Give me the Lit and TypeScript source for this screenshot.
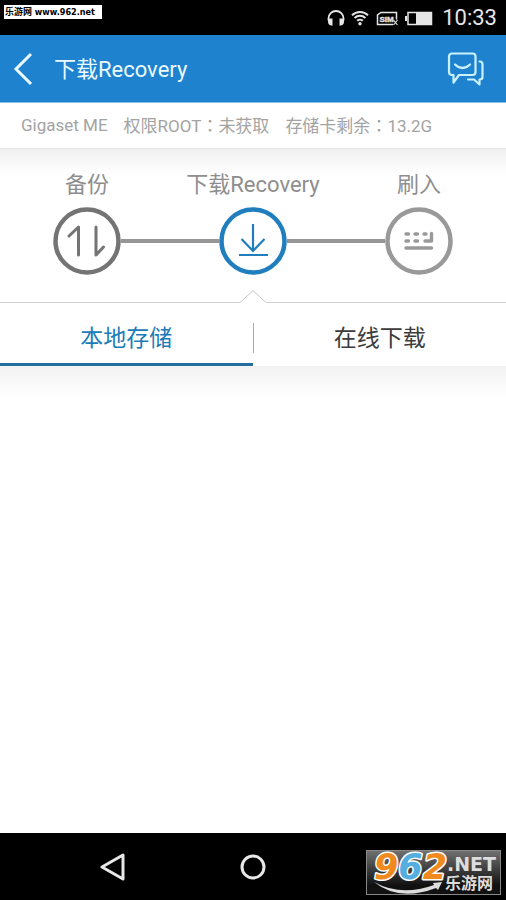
import { LitElement, html, css, svg } from "lit";
import { customElement, state } from "lit/decorators.js";
import { classMap } from "lit/directives/class-map.js";

const backupIcon = svg`<path d="M16 29l9.500-9v28M43 20v28l7.500-8" stroke-width="3" stroke-linecap="round" stroke-linejoin="round" />`;
const downloadIcon = svg`<path d="M34 17v27M22.500 32L34 44l11.500-12M20 48h29" stroke-width="2.200" />`;
const flashIcon = svg`<path d="M21 27h2.500M30 27h2.500M39 27h2M21 34h2.500M30 34h2.500M40 34h6.500v-7.500M21 41h25.500" stroke-width="3.400" stroke-linecap="round" stroke-linejoin="round" />`;

@customElement("status-bar")
class StatusBar extends LitElement {
  static styles = css`
    :host {
      display: flex;
      align-items: center;
      justify-content: flex-end;
      height: 35px;
      padding-right: 9px;
      background: #000;
      color: #e6e6e6;
      font: 400 22px/37px Roboto, sans-serif;
    }
    svg { display: block; }
    .wifi { margin-left: 6px; }
    .sim { margin-left: 7px; }
    .battery { margin: 0 9px 0 7px; }
    .sim-text { font: 700 8px "Liberation Sans", sans-serif; }
  `;
  render() {
    return html`
      <svg width="18" height="18" viewBox="0 0 18 18" fill="none" stroke="#e6e6e6">
        <path d="M1.500 11.500V9.500a7.500 7.500 0 0 1 15 0v2" stroke-width="1.800" />
        <path d="M1 11q0-1.500 2-1.500h2.500v7H4q-3-.5-3-4zM17 11q0-1.500-2-1.500h-2.500v7h1.500q3-.5 3-4z" fill="#e6e6e6" stroke="none" />
      </svg>
      <svg class="wifi" width="18" height="18" viewBox="0 0 18 18" fill="none" stroke="#e6e6e6" stroke-width="2">
        <path d="M1 6.200a11.500 11.500 0 0 1 16 0M3.600 9a7.800 7.800 0 0 1 10.800 0M6.200 11.800a4 4 0 0 1 5.600 0" />
        <circle cx="9" cy="14.700" r="1.700" fill="#e6e6e6" stroke="none" />
      </svg>
      <svg class="sim" width="22" height="18" viewBox="0 0 22 18" fill="none" stroke="#e6e6e6">
        <path d="M17 15.500H1.500V6L5 3.500h15.500v7" stroke-width="1.500" />
        <text class="sim-text" x="3.500" y="13" fill="#e6e6e6" stroke="#e6e6e6" stroke-width=".4">SIM</text>
        <path d="M17.500 11l4 5M21.500 11l-4 5" stroke-width="1.200" />
      </svg>
      <svg class="battery" width="28" height="18" viewBox="0 0 28 18">
        <path d="M0 7h2v5H0z" fill="#e6e6e6" />
        <path d="M3 3.500h23.500v12H3z" fill="none" stroke="#e6e6e6" stroke-width="1.500" />
        <path d="M11 4h15v11H11z" fill="#e6e6e6" />
      </svg>
      <span>10:33</span>
    `;
  }
}

@customElement("step-track")
class StepTrack extends LitElement {
  static styles = css`
    :host {
      display: block;
      padding-top: 22px;
      background: linear-gradient(#f0f0f0, #fff 26px);
      color: #8e8e8e;
    }
    ol {
      display: grid;
      grid-template-columns: repeat(3, 1fr);
      margin: 0;
      padding: 0 4px;
      list-style: none;
    }
    .label {
      display: block;
      height: 36px;
      font-size: 22px;
      line-height: 28px;
      text-align: center;
      white-space: nowrap;
    }
    .node { display: flex; align-items: center; }
    .line { flex: 1; height: 4px; background: #969696; }
    .hidden { visibility: hidden; }
    svg { display: block; flex: none; fill: none; stroke: currentColor; }
    .done { color: #747474; }
    .active { color: #207ebf; }
    .pending { color: #999; }
    .pointer { display: flex; margin-top: 15px; }
    .rule { flex: 1; border-bottom: 1px solid #d2d2d2; }
    .notch { stroke: #c8c8c8; }
  `;
  private steps = [
    { label: "备份", tone: "done", icon: backupIcon },
    { label: "下载Recovery", tone: "active", icon: downloadIcon },
    { label: "刷入", tone: "pending", icon: flashIcon },
  ];
  render() {
    const last = this.steps.length - 1;
    return html`
      <ol>
        ${this.steps.map(
          (s, i) => html`<li>
            <span class="label">${s.label}</span>
            <div class="node">
              <span class=${classMap({ line: true, hidden: i === 0 })}></span>
              <svg class=${s.tone} width="68" height="68" viewBox="0 0 68 68">
                <circle cx="34" cy="34" r="31.500" stroke-width="4.500" />
                ${s.icon}
              </svg>
              <span class=${classMap({ line: true, hidden: i === last })}></span>
            </div>
          </li>`
        )}
      </ol>
      <div class="pointer">
        <span class="rule"></span>
        <svg class="notch" width="26" height="13" viewBox="0 0 26 13"><path d="M0 12.500L13 .7l13 11.800" /></svg>
        <span class="rule"></span>
      </div>
    `;
  }
}

@customElement("site-badge")
class SiteBadge extends LitElement {
  static styles = css`
    :host {
      display: block;
      box-sizing: border-box;
      width: 135px;
      height: 45px;
      border: 1px solid #888;
      background: linear-gradient(#707070, #111 80%);
    }
    svg { display: block; overflow: visible; }
    .digits { font: italic 700 35px "DejaVu Sans", sans-serif; paint-order: stroke; stroke: #fff; stroke-width: 3px; stroke-linejoin: round; }
    .orange { fill: #f08a1d; }
    .blue { fill: #55aee0; }
    .net { font: 700 19px "DejaVu Sans", sans-serif; fill: #ddd; }
    .name { font: 700 16px "Noto Sans CJK SC", sans-serif; fill: #ddd; }
  `;
  render() {
    return html`<svg width="133" height="43" viewBox="0 0 133 43">
      <path d="M7 31q27 15 60 3l-1-2 9-1-4 8-2-2q-37 14-62-6z" fill="#ddd" />
      <text class="digits" x="7" y="28"><tspan class="orange">9</tspan><tspan class="blue">6</tspan><tspan class="orange">2</tspan></text>
      <text class="net" x="80" y="20">.NET</text>
      <text class="name" x="78" y="38">乐游网</text>
    </svg>`;
  }
}

@customElement("app-root")
class AppRoot extends LitElement {
  static styles = css`
    :host {
      display: flex;
      flex-direction: column;
      position: relative;
      min-height: 100vh;
      background: #fff;
      font-family: Roboto, "Noto Sans CJK SC", sans-serif;
    }
    button { margin: 0; padding: 0; border: 0; background: none; font: inherit; color: inherit; cursor: pointer; }
    svg { display: block; fill: none; }
    .site {
      position: absolute;
      top: 5px;
      left: 4px;
      padding: 0 7px 0 1px;
      background: #fff;
      color: #000;
      font: 700 9px/14px "DejaVu Sans Condensed", "DejaVu Sans", "Noto Sans CJK SC", sans-serif;
      text-decoration: none;
      white-space: nowrap;
    }
    header {
      display: flex;
      align-items: center;
      height: 67px;
      padding: 0 22px 0 13px;
      background: #1e82ce;
      color: #ecfaff;
      border-bottom: 1px solid #8bbde0;
    }
    h1 { flex: 1; margin: 0 0 0 21px; padding-top: 2px; font-size: 22px; font-weight: 400; line-height: 30px; }
    .info {
      display: flex;
      gap: 16px;
      padding: 0 21px;
      border-bottom: 1px solid #e6e6e6;
      color: #a3a3a3;
      font-size: 17px;
      line-height: 44px;
      white-space: nowrap;
    }
    .colon { font-family: "Noto Sans CJK TC", sans-serif; }
    .tabs { display: flex; align-items: center; color: #3c3c3c; }
    .tab { flex: 1; height: 63px; padding-top: 12px; border-bottom: 3px solid transparent; font-size: 23px; line-height: 30px; }
    .selected { color: #1c7bb8; border-color: #226e9f; }
    .divider { width: 1px; height: 30px; margin-top: 6px; background: #aaa; }
    main { flex: 1; background: linear-gradient(#f2f2f2, #fff 32px); }
    nav {
      display: grid;
      grid-template-columns: repeat(3, 140px);
      justify-content: center;
      height: 67px;
      background: #000;
    }
    .key { display: grid; place-items: center; }
    .key svg { stroke: #e8e8e8; stroke-width: 3; stroke-linejoin: round; }
    site-badge { position: absolute; right: 5px; bottom: 5px; }
  `;
  @state() private tab = 0;
  render() {
    return html`
      <status-bar></status-bar>
      <header>
        <button aria-label="返回">
          <svg width="20" height="34" viewBox="0 0 20 34" stroke="#ecfaff" stroke-width="3"><path d="M18 2L3 17l15 15" /></svg>
        </button>
        <h1>下载Recovery</h1>
        <button aria-label="消息">
          <svg width="37" height="34" viewBox="0 0 37 34" stroke="#c9f1ff" stroke-width="2.200" stroke-linejoin="round" stroke-linecap="round">
            <path d="M5 1.500h20.500a3 3 0 0 1 3 3V20a3 3 0 0 1-3 3H12l-5.500 7.500V23H5a3 3 0 0 1-3-3V4.500a3 3 0 0 1 3-3z" />
            <path d="M8 12.500q7.500 7 15 0" />
            <path d="M32.500 9.500h.5q2.500 0 2.500 3V25q0 2.500-3 2.500v5L27 27.500h-6" />
          </svg>
        </button>
      </header>
      <div class="info">
        <span>Gigaset ME</span>
        <span>权限ROOT<span class="colon">：</span>未获取</span>
        <span>存储卡剩余<span class="colon">：</span>13.2G</span>
      </div>
      <step-track></step-track>
      <div class="tabs" role="tablist">
        ${this.renderTab("本地存储", 0)}
        <span class="divider"></span>
        ${this.renderTab("在线下载", 1)}
      </div>
      <main></main>
      <nav>
        <button class="key" aria-label="后退">
          <svg width="26" height="28" viewBox="0 0 26 28"><path d="M2 14L23 2v24z" /></svg>
        </button>
        <button class="key" aria-label="主页">
          <svg width="26" height="26" viewBox="0 0 26 26"><circle cx="13" cy="13" r="11" /></svg>
        </button>
      </nav>
      <a class="site" href="#">乐游网 www.962.net</a>
      <site-badge></site-badge>
    `;
  }
  private renderTab(label: string, index: number) {
    const selected = this.tab === index;
    return html`<button
      role="tab"
      aria-selected=${selected}
      class=${classMap({ tab: true, selected })}
      @click=${() => (this.tab = index)}
    >${label}</button>`;
  }
}
